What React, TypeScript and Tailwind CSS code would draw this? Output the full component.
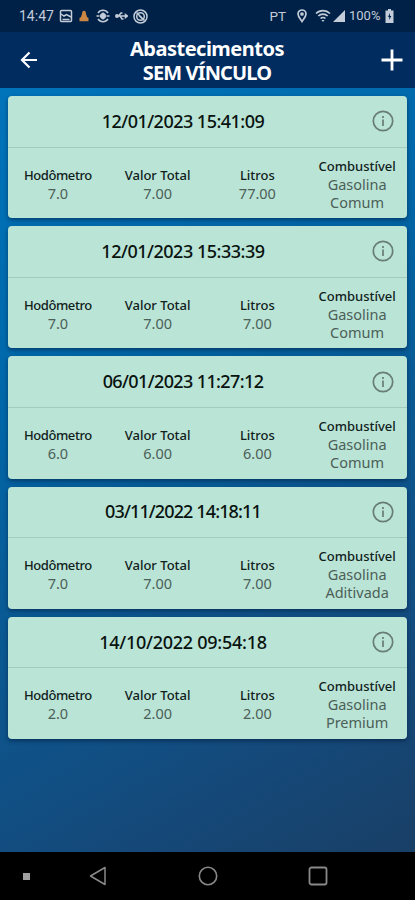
const records = [
  { date: "12/01/2023 15:41:09", odometer: "7.0", total: "7.00", liters: "77.00", fuel: "Comum", dateClass: "tracking-[-0.52px]" },
  { date: "12/01/2023 15:33:39", odometer: "7.0", total: "7.00", liters: "7.00", fuel: "Comum", dateClass: "tracking-[-0.48px]" },
  { date: "06/01/2023 11:27:12", odometer: "6.0", total: "6.00", liters: "6.00", fuel: "Comum", dateClass: "tracking-[-0.62px]" },
  { date: "03/11/2022 14:18:11", odometer: "7.0", total: "7.00", liters: "7.00", fuel: "Aditivada", dateClass: "tracking-[-0.88px]" },
  { date: "14/10/2022 09:54:18", odometer: "2.0", total: "2.00", liters: "2.00", fuel: "Premium", dateClass: "tracking-[-0.26px]" },
];

function StatusBar() {
  return (
    <div className="flex h-8 shrink-0 items-center bg-[#002147] pl-[19px] pr-[21px] font-[Roboto,sans-serif] text-[#c3ccd8]">
      <span className="w-[36px] whitespace-nowrap text-[14px] leading-8">14:47</span>
      <svg className="ml-[4px]" width="14" height="14" viewBox="0 0 14 14" fill="none" stroke="currentColor" strokeWidth="1.5">
        <rect x="1.5" y="1.5" width="11" height="11" rx="1" />
        <path d="M2 5l3 2 2.5-1.5L12 8M3.5 10.5h7" />
      </svg>
      <svg className="ml-[6px]" width="10" height="12" viewBox="0 0 10 12" fill="#cc8744">
        <path d="M5 .8c1.3 0 2 1 1.8 2.4L8 7l1.5 1v3.2H.5V8L2 7l1.2-3.8C3 1.8 3.700.8 5 .8z" />
      </svg>
      <svg className="ml-[7px]" width="14" height="14" viewBox="0 0 14 14" fill="none" stroke="currentColor" strokeWidth="1.5">
        <path d="M2 4A6 6 0 0 1 12 4M2 10a6 6 0 0 0 10 0M.5 7h3M10.5 7h3" />
        <circle cx="7" cy="7" r="2.3" fill="currentColor" />
        <path d="M7 3.5v7" />
      </svg>
      <svg className="ml-[5px]" width="13" height="12" viewBox="0 0 13 12" fill="none" stroke="currentColor" strokeWidth="1.5">
        <path d="M1 6h11M3.500 6l2.500-3h1.500M5 6l2 3h1.500" />
        <circle cx="2" cy="6" r="1.2" fill="currentColor" />
        <path d="M10.500 4.500L12.500 6l-2 1.500z" fill="currentColor" />
      </svg>
      <svg className="ml-[5px]" width="15" height="15" viewBox="0 0 15 15" fill="none" stroke="currentColor" strokeWidth="1.5">
        <circle cx="7.5" cy="7.5" r="6.5" />
        <circle cx="7.5" cy="7.5" r="3.8" />
        <path d="M3.5 3.5l8 8M6 6.500l3 3" />
      </svg>
      <span className="ml-auto text-[13.5px]">PT</span>
      <svg className="ml-[11px]" width="10" height="14" viewBox="0 0 10 14" fill="none" stroke="currentColor" strokeWidth="1.7">
        <path d="M5 12.500C3 9.500 1 7.500 1 5a4 4 0 0 1 8 0c0 2.500-2 4.500-4 7.500z" />
        <circle cx="5" cy="5" r="1" fill="currentColor" />
      </svg>
      <svg className="ml-[8px]" width="16" height="14" viewBox="0 0 16 14" fill="none" stroke="currentColor" strokeWidth="1.7">
        <path d="M1 4.500a10 10 0 0 1 14 0M3.300 7a6.700 6.700 0 0 1 9.400 0M5.600 9.500a3.400 3.400 0 0 1 4.800 0" />
        <path d="M8 13l-1.500-2h3z" fill="currentColor" stroke="none" />
      </svg>
      <svg className="ml-[2px]" width="12" height="12" viewBox="0 0 12 12" fill="currentColor">
        <path d="M12 0v12H0z" />
      </svg>
      <span className="ml-[4px] w-[32px] whitespace-nowrap text-[13px]">100%</span>
      <svg className="ml-[4px]" width="9" height="14" viewBox="0 0 9 14">
        <path d="M3 0h3v1.500h2.500V14H.5V1.500H3z" fill="currentColor" />
        <path d="M5 4L3 8h1.300v3L6.300 7H5z" fill="#002147" />
      </svg>
    </div>
  );
}

function Header() {
  return (
    <header className="flex h-14 shrink-0 items-center bg-[#002c5f] pl-[20px] pr-[12px] text-white">
      <svg width="18" height="18" viewBox="0 0 18 18" fill="none" stroke="currentColor" strokeWidth="2.2">
        <path d="M17 9H2M9.500 1.500L2 9l7.500 7.500" />
      </svg>
      <h1 className="flex flex-1 flex-col items-center pr-[5px] pt-px text-[20px] font-bold leading-[24px]">
        <span className="whitespace-nowrap tracking-[-0.5px]">Abastecimentos</span>
        <span className="whitespace-nowrap tracking-[-0.85px]">SEM VÍNCULO</span>
      </h1>
      <svg width="22" height="22" viewBox="0 0 22 22" fill="none" stroke="currentColor" strokeWidth="2.8">
        <path d="M11 .5v21M.5 11h21" />
      </svg>
    </header>
  );
}

function Field({ label, value, labelClass = "" }: { label: string; value: string; labelClass?: string }) {
  return (
    <div className="flex flex-col items-center">
      <span className={`text-[13px] font-medium leading-[18px] text-[#10201b] ${labelClass}`}>{label}</span>
      <span className="w-[72px] text-center text-[14.5px] leading-[18px] text-[#4c6058]">{value}</span>
    </div>
  );
}

function RecordCard({ record }: { record: (typeof records)[number] }) {
  return (
    <section className="h-[122.2px] shrink-0 rounded-[4px] bg-[#bae4d6] shadow-[0_2px_4px_rgba(0,20,50,0.5)]">
      <div className="flex h-[51.5px] items-center border-b border-[#a3cabf] pr-[13px]">
        <h2 className={`flex-1 pr-[14px] text-center text-[18px] font-medium text-[#08120f] ${record.dateClass}`}>{record.date}</h2>
        <svg width="22" height="22" viewBox="0 0 22 22" fill="none" stroke="#687d74" strokeWidth="1.7">
          <circle cx="11" cy="11" r="9.7" />
          <path d="M11 9.500v6.500M11 6v2" />
        </svg>
      </div>
      <div className="grid h-[70px] grid-cols-4 items-center pt-[2px]">
        <Field label="Hodômetro" value={record.odometer} labelClass="tracking-[-0.42px]" />
        <Field label="Valor Total" value={record.total} />
        <Field label="Litros" value={record.liters} />
        <Field label="Combustível" value={`Gasolina ${record.fuel}`} />
      </div>
    </section>
  );
}

function NavigationBar() {
  return (
    <nav className="flex h-12 shrink-0 items-center bg-black pl-[23px] text-[#898989]">
      <span className="size-[7px] bg-[#a0a0a0]" />
      <svg className="ml-[59px]" width="18" height="20" viewBox="0 0 18 20" fill="none" stroke="currentColor" strokeWidth="1.5" strokeLinejoin="round">
        <path d="M16 1.500v17L1.500 10z" />
      </svg>
      <svg className="ml-[91px]" width="20" height="20" viewBox="0 0 20 20" fill="none" stroke="currentColor" strokeWidth="1.6">
        <circle cx="10" cy="10" r="8.7" />
      </svg>
      <svg className="ml-[90px]" width="20" height="20" viewBox="0 0 20 20" fill="none" stroke="currentColor" strokeWidth="1.8">
        <rect x="1.5" y="1.5" width="17" height="17" rx="2" />
      </svg>
    </nav>
  );
}

export default function App() {
  return (
    <div className="flex h-[900px] w-[415px] flex-col overflow-hidden font-['Noto_Sans',sans-serif]">
      <StatusBar />
      <Header />
      <main className="flex flex-1 flex-col gap-[8px] bg-linear-[150deg,#0074bb_0%,#0068aa_30%,#144a7c_80%,#193f66_100%] px-2 pt-2">
        {records.map((record) => (
          <RecordCard key={record.date} record={record} />
        ))}
      </main>
      <NavigationBar />
    </div>
  );
}
